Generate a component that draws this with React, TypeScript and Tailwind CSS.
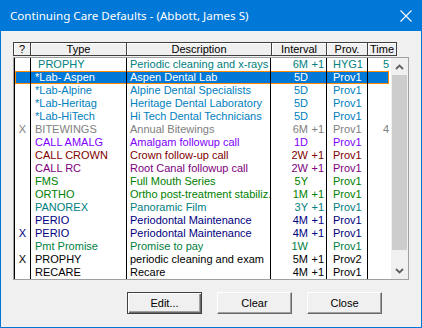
import React from 'react';

type Row = {
  flag?: boolean;
  type: string;
  desc: string;
  interval: string;
  plus?: boolean;
  prov: string;
  time?: string;
  color: string;
  selected?: boolean;
};

const rows: Row[] = [
  { type: '\u00a0PROPHY', desc: 'Periodic cleaning and x-rays', interval: '6M', plus: true, prov: 'HYG1', time: '5', color: 'text-[#008080]' },
  { type: '*Lab- Aspen', desc: 'Aspen Dental Lab', interval: '5D', prov: 'Prov1', color: 'text-white', selected: true },
  { type: '*Lab-Alpine', desc: 'Alpine Dental Specialists', interval: '5D', prov: 'Prov1', color: 'text-[#0080c0]' },
  { type: '*Lab-Heritag', desc: 'Heritage Dental Laboratory', interval: '5D', prov: 'Prov1', color: 'text-[#0080c0]' },
  { type: '*Lab-HiTech', desc: 'Hi Tech Dental Technicians', interval: '5D', prov: 'Prov1', color: 'text-[#0080c0]' },
  { flag: true, type: 'BITEWINGS', desc: 'Annual Bitewings', interval: '6M', plus: true, prov: 'Prov1', time: '4', color: 'text-[#808080]' },
  { type: 'CALL AMALG', desc: 'Amalgam followup call', interval: '1D', prov: 'Prov1', color: 'text-[#8000ff]' },
  { type: 'CALL CROWN', desc: 'Crown follow-up call', interval: '2W', plus: true, prov: 'Prov1', color: 'text-[#800000]' },
  { type: 'CALL RC', desc: 'Root Canal followup call', interval: '2W', plus: true, prov: 'Prov1', color: 'text-[#800080]' },
  { type: 'FMS', desc: 'Full Mouth Series', interval: '5Y', prov: 'Prov1', color: 'text-[#008000]' },
  { type: 'ORTHO', desc: 'Ortho post-treatment stabiliz.', interval: '1M', plus: true, prov: 'Prov1', color: 'text-[#008000]' },
  { type: 'PANOREX', desc: 'Panoramic Film', interval: '3Y', plus: true, prov: 'Prov1', color: 'text-[#008080]' },
  { type: 'PERIO', desc: 'Periodontal Maintenance', interval: '4M', plus: true, prov: 'Prov1', color: 'text-[#000080]' },
  { flag: true, type: 'PERIO', desc: 'Periodontal Maintenance', interval: '4M', plus: true, prov: 'Prov1', color: 'text-[#000080]' },
  { type: 'Pmt Promise', desc: 'Promise to pay', interval: '1W', prov: 'Prov1', color: 'text-[#008040]' },
  { flag: true, type: 'PROPHY', desc: 'periodic cleaning and exam', interval: '5M', plus: true, prov: 'Prov2', color: 'text-black' },
  { type: 'RECARE', desc: 'Recare', interval: '4M', plus: true, prov: 'Prov1', color: 'text-black' },
];

const headers = [
  { label: '?', w: 'w-[17px]' },
  { label: 'Type', w: 'w-[96px]' },
  { label: 'Description', w: 'w-[145px]' },
  { label: 'Interval', w: 'w-[55px]' },
  { label: 'Prov.', w: 'w-[41px]' },
  { label: 'Time', w: 'w-[29px]' },
];

const font = { fontFamily: '"Liberation Sans", Arial, sans-serif' };

const Chevron = ({ up }: { up?: boolean }) => (
  <svg width="9" height="6" viewBox="0 0 9 6">
    <polyline
      points={up ? '1,5 4.5,1.5 8,5' : '1,1 4.5,4.5 8,1'}
      fill="none"
      stroke="#606060"
      strokeWidth="1.8"
    />
  </svg>
);

const Button = ({ label, primary }: { label: string; primary?: boolean }) => (
  <button
    type="button"
    className={`w-[75px] h-[22px] bg-[#f0f0f0] text-[11px] text-black flex items-center justify-center ${
      primary
        ? 'border border-[#404040] shadow-[inset_1px_1px_0_#fff,inset_-1px_-1px_0_#696969,inset_-2px_-2px_0_#a0a0a0]'
        : 'border border-t-white border-l-white border-r-[#696969] border-b-[#696969] shadow-[inset_-1px_-1px_0_#a0a0a0]'
    }`}
  >
    {label}
  </button>
);

export default function App() {
  return (
    <div className="w-[422px] h-[328px] flex flex-col bg-[#f0f0f0] border border-t-0 border-[#0078d7] overflow-hidden" style={font}>
      {/* title bar */}
      <div className="h-[31px] bg-[#0078d7] flex items-center justify-between pl-[9px] pr-[9px] shrink-0">
        <span className="text-white text-[11.6px]" style={{ fontFamily: '"Noto Sans", "Open Sans", sans-serif' }}>
          Continuing Care Defaults - (Abbott, James S)
        </span>
        <svg width="12" height="12" viewBox="0 0 12 12">
          <path d="M0.5 0.5 L11.5 11.5 M11.5 0.5 L0.5 11.5" stroke="white" strokeWidth="1.1" />
        </svg>
      </div>

      <div className="flex flex-col pl-[12px] pt-[11px]">
        {/* column headers */}
        <div className="flex h-[14px] border-t border-b border-l border-[#404040] self-start">
          {headers.map(h => (
            <div
              key={h.label}
              className={`${h.w} h-full border-r border-[#404040] shadow-[inset_1px_1px_0_#fff] flex items-center justify-center text-[11px] leading-none text-black`}
            >
              {h.label}
            </div>
          ))}
        </div>

        {/* list */}
        <div className="mt-px w-[396px] h-[223px] border border-[#a0a0a0] flex">
          <div className="w-[377px] bg-white flex flex-col">
            {rows.map((r, i) => (
              <div key={i} className={`relative flex h-[13px] text-[11px] leading-[13px] ${r.color}`}>
                {r.selected && (
                  <div className="absolute left-px right-[2px] top-0 bottom-0 bg-[#0078d7] border border-[#ff8c00]" />
                )}
                <div className="relative w-[16px] border-l border-black text-center">{r.flag ? 'X' : ''}</div>
                <div className="relative w-[96px] border-l border-black pl-[4px] whitespace-nowrap overflow-hidden">{r.type}</div>
                <div className="relative w-[144px] border-l border-black pl-[3px] whitespace-nowrap overflow-hidden">{r.desc}</div>
                <div className="relative w-[56px] border-l border-black flex pr-[2px]">
                  <span className="flex-1 text-right">{r.interval}</span>
                  <span className="w-[13px] ml-[3px] text-right">{r.plus ? '+1' : ''}</span>
                </div>
                <div className="relative w-[41px] border-l border-black pl-[6px]">{r.prov}</div>
                <div className="relative w-[24px] border-l border-black text-right pr-[2px]">{r.time ?? ''}</div>
              </div>
            ))}
          </div>
          {/* scrollbar */}
          <div className="w-[17px] bg-[#f0f0f0] flex flex-col">
            <div className="h-[17px] flex items-center justify-center">
              <Chevron up />
            </div>
            <div className="h-[175px] mx-px bg-[#cdcdcd]" />
            <div className="flex-1" />
            <div className="h-[17px] flex items-center justify-center">
              <Chevron />
            </div>
          </div>
        </div>

        {/* buttons */}
        <div className="flex gap-[15px] ml-[114px] mt-[12px]">
          <Button label="Edit..." primary />
          <Button label="Clear" />
          <Button label="Close" />
        </div>
      </div>
    </div>
  );
}
